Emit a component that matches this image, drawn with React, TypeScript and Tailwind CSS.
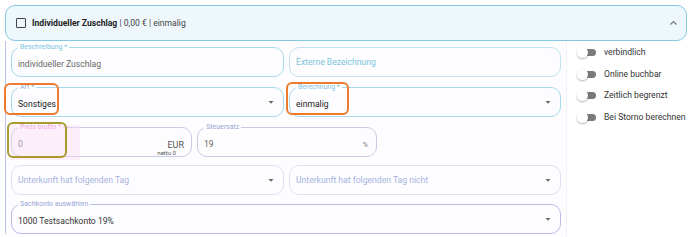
import React from "react";

const Arrow = () => (
  <svg width="8" height="5" viewBox="0 0 8 5" className="shrink-0">
    <path d="M1.5 1 L4 3.8 L6.5 1 Z" fill="#666" />
  </svg>
);

function Field({
  label,
  labelColor = "text-[#7cc3de]",
  border = "border-[#a9d8ea]",
  value,
  valueClass = "text-[#222]",
  placeholder,
  placeholderClass = "text-[#a7b3e0]",
  arrow,
  className = "",
  children,
}: {
  label?: string;
  labelColor?: string;
  border?: string;
  value?: string;
  valueClass?: string;
  placeholder?: string;
  placeholderClass?: string;
  arrow?: boolean;
  className?: string;
  children?: React.ReactNode;
}) {
  return (
    <div className={`relative h-[30px] rounded-[10px] border ${border} flex items-center pl-[6px] pr-[8px] ${className}`}>
      {label && (
        <span className={`absolute -top-[6px] left-[6px] bg-white px-[2px] text-[7px] leading-[10px] ${labelColor}`}>
          {label}
        </span>
      )}
      {value !== undefined ? (
        <span className={`text-[8.6px] leading-none pt-[5px] ${valueClass}`}>{value}</span>
      ) : (
        <span className={`text-[8.6px] leading-none ${placeholderClass}`}>{placeholder}</span>
      )}
      <div className="flex-1" />
      {children}
      {arrow && <Arrow />}
    </div>
  );
}

function Toggle({ label }: { label: string }) {
  return (
    <div className="flex items-center h-[11px]">
      <div className="relative w-[20px] h-[11px] shrink-0">
        <div className="absolute left-[5px] top-[2px] w-[14px] h-[7px] rounded-full bg-[#7a7a7a]" />
        <div className="absolute left-0 top-0 w-[11px] h-[11px] rounded-full bg-white shadow-[0_1px_2px_rgba(0,0,0,0.3)]" />
      </div>
      <span className="ml-[7px] text-[8.6px] text-[#333] leading-none whitespace-nowrap">{label}</span>
    </div>
  );
}

export default function App() {
  return (
    <div
      className="relative w-[688px] h-[237px] bg-white overflow-hidden pl-[5px] pt-[5px]"
      style={{ fontFamily: "Roboto, 'Liberation Sans', sans-serif" }}
    >
      <div className="w-[682px]">
        {/* header */}
        <div className="h-[36px] rounded-[10px] border-[1.5px] border-[#86c8e0] bg-[#eef7fc] flex items-center pl-[10px] pr-[8px]">
          <div className="w-[10px] h-[10px] border-[1.5px] border-[#444] rounded-[1px]" />
          <span className="ml-[6px] text-[8.6px] text-[#222]">
            <b className="font-bold">Individueller Zuschlag</b>
            <span className="text-[#444]"> | 0,00 € | einmalig</span>
          </span>
          <div className="flex-1" />
          <svg width="9" height="6" viewBox="0 0 9 6">
            <path d="M1.5 4.5 L4.5 1.5 L7.5 4.5" fill="none" stroke="#777" strokeWidth="1.2" />
          </svg>
        </div>
        {/* body */}
        <div className="flex border-l border-[#b9c3ea] h-[200px] rounded-bl-[10px]">
          <div className="w-[560px] pl-[5px] pr-[5px] pt-[6px] flex flex-col bg-[#fdfdff]">
            <div className="flex gap-[5px]">
              <Field label="Beschreibung *" value="individueller Zuschlag" valueClass="text-[#666]" className="w-[273px]" />
              <Field placeholder="Externe Bezeichnung" placeholderClass="text-[#7cc3de]" border="border-[#c0e3ef]" className="w-[272px]" />
            </div>
            <div className="flex gap-[5px] mt-[10px]">
              <Field label="Art *" labelColor="text-[#8fb0e0]" value="Sonstiges" arrow className="w-[273px]" />
              <Field label="Berechnung *" value="einmalig" arrow className="w-[272px]" />
            </div>
            <div className="flex gap-[5px] mt-[10px]">
              <Field label="Preis brutto *" labelColor="text-[#e58fd8]" border="border-[#c9cbe8]" value="0" valueClass="text-[#666]" className="w-[181px]">
                <span className="text-[9px] leading-none text-[#555] mt-[7px] mr-[-1px]">EUR</span>
                <span className="absolute right-[15px] bottom-[0px] text-[6px] leading-none text-[#555]">netto 0</span>
              </Field>
              <Field label="Steuersatz" labelColor="text-[#98a4d6]" border="border-[#c9cbe8]" value="19" valueClass="text-[#666]" className="w-[180px]">
                <span className="text-[7px] leading-none text-[#777] mt-[6px]">%</span>
              </Field>
            </div>
            <div className="flex gap-[5px] mt-[8px]">
              <Field placeholder="Unterkunft hat folgenden Tag" border="border-[#dde0f3]" arrow className="w-[273px]" />
              <Field placeholder="Unterkunft hat folgenden Tag nicht" border="border-[#dde0f3]" arrow className="w-[272px]" />
            </div>
            <div className="flex mt-[9px]">
              <Field label="Sachkonto auswählen" labelColor="text-[#98a4d6]" border="border-[#b7bde4]" value="1000 Testsachkonto 19%" valueClass="text-[#333]" arrow className="w-[550px]" />
            </div>
          </div>
          <div className="flex-1 border-l border-[#f0f2f8] pl-[10px] pt-[6px] flex flex-col gap-[10.5px] bg-white">
            <Toggle label="verbindlich" />
            <Toggle label="Online buchbar" />
            <Toggle label="Zeitlich begrenzt" />
            <Toggle label="Bei Storno berechnen" />
          </div>
        </div>
      </div>

      {/* annotation overlays */}
      <div className="absolute left-[10px] top-[125px] w-[70px] h-[35px] bg-[#fbd9f3] opacity-40 pointer-events-none" />
      <div className="absolute left-[4px] top-[83px] w-[55px] h-[32px] rounded-[6px] border-2 border-[#ee7a2c] pointer-events-none" />
      <div className="absolute left-[286px] top-[82px] w-[63px] h-[33px] rounded-[6px] border-2 border-[#ee7a2c] pointer-events-none" />
      <div className="absolute left-[7px] top-[122px] w-[60px] h-[36px] rounded-[6px] border-2 border-[#a99a2b] pointer-events-none" />
    </div>
  );
}
